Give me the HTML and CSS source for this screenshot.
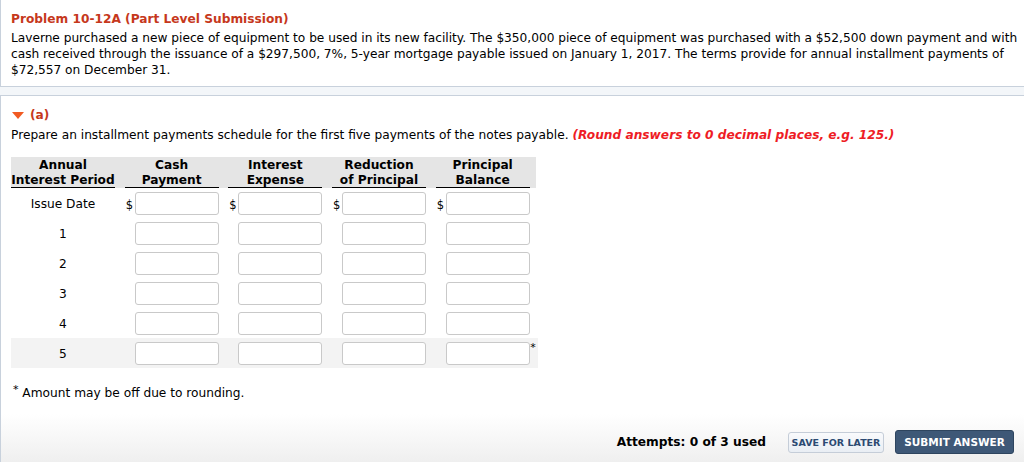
FILE: index.html
```html
<!DOCTYPE html>
<html>
<head>
<meta charset="utf-8">
<link rel="stylesheet" href="styles.css">
</head>
<body>
<div class="problem">
  <div class="problem-title">Problem 10-12A (Part Level Submission)</div>
  <div class="problem-text">Laverne purchased a new piece of equipment to be used in its new facility. The $350,000 piece of equipment was purchased with a $52,500 down payment and with<br>cash received through the issuance of a $297,500, 7%, 5-year mortgage payable issued on January 1, 2017. The terms provide for annual installment payments of<br>$72,557 on December 31.</div>
</div>
<div class="band"></div>
<div class="part">
  <div class="part-head"><span class="tri"></span><span class="part-label">(a)</span></div>
  <div class="instr">Prepare an installment payments schedule for the first five payments of the notes payable. <span class="round">(Round answers to 0 decimal places, e.g. 125.)</span></div>
  <div class="sched">
    <div class="srow shead">
      <div class="th"><span>Annual<br>Interest Period</span></div>
      <div class="th"><span>Cash<br>Payment</span></div>
      <div class="th"><span>Interest<br>Expense</span></div>
      <div class="th"><span>Reduction<br>of Principal</span></div>
      <div class="th"><span>Principal<br>Balance</span></div>
    </div>
    <div class="srow">
      <div class="lbl">Issue Date</div>
      <div class="cell"><span class="cur">$</span><input class="box"></div>
      <div class="cell"><span class="cur">$</span><input class="box"></div>
      <div class="cell"><span class="cur">$</span><input class="box"></div>
      <div class="cell"><span class="cur">$</span><input class="box"></div>
    </div>
    <div class="srow">
      <div class="lbl">1</div>
      <div class="cell"><input class="box"></div>
      <div class="cell"><input class="box"></div>
      <div class="cell"><input class="box"></div>
      <div class="cell"><input class="box"></div>
    </div>
    <div class="srow">
      <div class="lbl">2</div>
      <div class="cell"><input class="box"></div>
      <div class="cell"><input class="box"></div>
      <div class="cell"><input class="box"></div>
      <div class="cell"><input class="box"></div>
    </div>
    <div class="srow">
      <div class="lbl">3</div>
      <div class="cell"><input class="box"></div>
      <div class="cell"><input class="box"></div>
      <div class="cell"><input class="box"></div>
      <div class="cell"><input class="box"></div>
    </div>
    <div class="srow">
      <div class="lbl">4</div>
      <div class="cell"><input class="box"></div>
      <div class="cell"><input class="box"></div>
      <div class="cell"><input class="box"></div>
      <div class="cell"><input class="box"></div>
    </div>
    <div class="srow last">
      <div class="lbl">5</div>
      <div class="cell"><input class="box"></div>
      <div class="cell"><input class="box"></div>
      <div class="cell"><input class="box"></div>
      <div class="cell"><input class="box"><span class="ast">*</span></div>
    </div>
  </div>
  <div class="note"><sup>*</sup> Amount may be off due to rounding.</div>
  <div class="footer">
    <span class="attempts">Attempts: 0 of 3 used</span>
    <button class="btn-save">SAVE FOR LATER</button>
    <button class="btn-submit">SUBMIT ANSWER</button>
  </div>
</div>
</body>
</html>
```

FILE: styles.css
```css
html, body {
  margin: 0;
  padding: 0;
  background: #ffffff;
}
body {
  font-family: "DejaVu Sans", Verdana, sans-serif;
  font-size: 12.2px;
  line-height: 16px;
  color: #000;
  width: 1024px;
  height: 462px;
  overflow: hidden;
}
.problem {
  border-left: 1px solid #c8d1dc;
  border-bottom: 1px solid #c8d1dc;
  padding: 11px 10px 8px 10px;
}
.problem-title {
  font-weight: bold;
  color: #c6381c;
  margin-bottom: 3px;
}
.problem-text {
  white-space: nowrap;
  letter-spacing: -0.02px;
}
.band {
  height: 8px;
  background: #f3f6f9;
}
.part {
  border-top: 1px solid #c8d1dc;
  border-left: 1px solid #c8d1dc;
  padding: 11px 0 0 10px;
  height: 355px;
  position: relative;
}
.part-head {
  display: flex;
  align-items: center;
  gap: 6px;
  font-weight: bold;
  color: #c6381c;
}
.tri {
  width: 0;
  height: 0;
  border-left: 6px solid transparent;
  border-right: 6px solid transparent;
  border-top: 7px solid #f15a22;
  margin-left: 1px;
}
.instr {
  margin-top: 4px;
}
.round {
  color: #ee1c25;
  font-weight: bold;
  font-style: italic;
}
.sched {
  margin-top: 14px;
  width: 525px;
}
.srow {
  display: grid;
  grid-template-columns: 104px repeat(4, 94px);
  column-gap: 9.67px;
  padding-right: 7px;
  height: 30px;
  align-items: center;
}
.shead {
  background: #e5e5e5;
  height: 31px;
  align-items: stretch;
}
.th {
  display: flex;
}
.th span {
  flex: 1;
  text-align: center;
  font-weight: bold;
  line-height: 15px;
  padding-top: 1px;
  box-sizing: border-box;
  height: 31px;
  white-space: nowrap;
  border-bottom: 1px solid #000;
}
.lbl {
  text-align: center;
  padding-top: 1px;
}
.cell {
  display: flex;
  justify-content: flex-end;
  align-items: center;
  position: relative;
}
.cur {
  margin-right: auto;
  margin-left: 1px;
  font-size: 11.5px;
  padding-top: 4px;
}
.box {
  box-sizing: border-box;
  width: 84px;
  height: 23px;
  border: 1px solid #c9c9c9;
  border-radius: 3px;
  background: #fff;
  margin: 0;
  padding: 0;
}
.last {
  background: #f3f3f3;
  width: 520px;
  padding-right: 7px;
}
.ast {
  position: absolute;
  right: -6px;
  top: 0;
  font-size: 11px;
  line-height: 11px;
}
.note {
  margin-top: 17px;
  margin-left: 2px;
}
.note sup {
  font-size: 11px;
  line-height: 0;
  vertical-align: 4px;
}
.footer {
  position: absolute;
  left: 0;
  right: 0;
  bottom: 0;
  height: 48px;
  background: linear-gradient(#ffffff, #efefef);
  display: flex;
  justify-content: flex-end;
  align-items: center;
  padding-right: 10px;
  padding-top: 8px;
  box-sizing: border-box;
}
.attempts {
  font-weight: bold;
  margin-right: 22px;
}
.btn-save {
  font-family: "DejaVu Sans", Verdana, sans-serif;
  font-weight: bold;
  font-size: 9.5px;
  color: #2c4a72;
  background: linear-gradient(#f9fafc, #e9eef4);
  border: 1px solid #c5cdd8;
  border-radius: 3px;
  width: 96px;
  height: 21px;
  padding: 0;
  margin-right: 11px;
}
.btn-submit {
  font-family: "DejaVu Sans", Verdana, sans-serif;
  font-weight: bold;
  font-size: 10.5px;
  color: #ffffff;
  background: #3e5877;
  border: 1px solid #2e455f;
  border-radius: 3px;
  width: 119px;
  height: 24px;
  padding: 0;
}
```
